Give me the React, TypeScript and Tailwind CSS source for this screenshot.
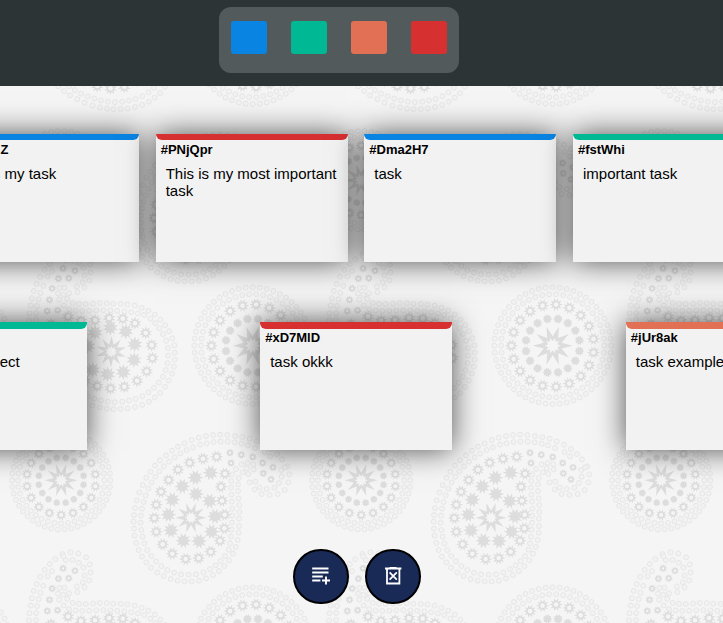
import React from "react";

type Point = [number, number];

const DARK = "#dddddd";
const LIGHT = "#e5e5e5";

// Paisley geometry, in thirds of a pixel; the head's centre is at HEAD.
const HEAD: Point = [213, 293];
const OUTER_BEADS: Point[] = [
  [404, 208], [425, 222], [449, 225], [473, 222], [494, 210], [505, 187], [508, 163], [502, 139], [486, 118], [471, 102],
  [453, 87], [432, 74], [410, 64], [389, 56], [367, 51], [345, 48], [322, 45], [300, 44], [279, 45], [258, 48],
  [236, 53], [215, 60], [194, 70], [174, 80], [156, 92], [138, 106], [120, 121], [105, 137], [91, 155], [79, 173],
  [68, 195], [58, 217], [50, 241], [45, 264], [42, 285], [41, 305], [42, 326], [44, 347], [49, 369], [56, 390],
  [66, 410], [79, 427], [93, 443], [112, 457], [131, 468], [152, 477], [173, 482], [194, 484], [215, 484], [237, 482],
  [258, 475], [279, 465], [297, 453], [313, 438], [328, 421], [339, 401], [347, 381], [353, 360], [356, 338], [357, 318],
  [357, 296], [358, 276], [358, 255], [356, 235], [354, 213], [354, 193], [356, 174], [368, 157], [385, 162], [389, 187],
];
const INNER_BEADS: Point[] = [
  [406, 185], [419, 202], [440, 207], [463, 203], [477, 189], [485, 170], [484, 150], [495, 142], [450, 109], [434, 96], [405, 84],
  [384, 76], [365, 71], [344, 67], [323, 65], [302, 65], [281, 66], [260, 70], [240, 74], [219, 82], [200, 90],
  [181, 100], [164, 112], [147, 125], [132, 139], [118, 154], [106, 170], [95, 187], [85, 206], [77, 226], [71, 246],
  [66, 266], [63, 287], [62, 308], [64, 330], [68, 350], [73, 370], [82, 390], [94, 408], [108, 424], [124, 438],
  [142, 450], [162, 458], [183, 463], [206, 464], [228, 463], [250, 457], [270, 447], [287, 436], [302, 423], [315, 408],
  [326, 389], [330, 370], [333, 350], [335, 329], [336, 308], [337, 287], [337, 266], [336, 245], [334, 224], [333, 203],
  [334, 183], [337, 163], [348, 147], [365, 133], [383, 129], [400, 133], [401, 148], [380, 145],
];
const HOLLOW_STARS: Point[] = [
  [290, 110], [249, 116], [209, 128], [174, 149], [146, 180], [123, 215], [109, 254], [103, 294], [109, 335], [128, 373],
  [157, 401], [197, 417], [236, 414], [272, 395], [300, 362], [313, 325], [314, 284], [306, 242], [303, 200], [315, 161],
];
const TAIL_STARS: Point[] = [
  [330, 98], [364, 104], [398, 111], [428, 129], [459, 142], [333, 129], [430, 160], [453, 178],
];
const SOLID_STARS: Point[] = [
  [272, 158], [226, 173], [187, 199], [157, 239], [145, 284], [153, 331], [190, 362], [237, 363], [275, 335], [285, 289],
  [269, 243], [228, 222],
];

function starPath(cx: number, cy: number, outer: number, inner: number, tips = 10) {
  const pts: string[] = [];
  for (let i = 0; i < tips * 2; i++) {
    const r = i % 2 === 0 ? outer : inner;
    const a = (Math.PI * i) / tips;
    pts.push(`${(cx + r * Math.cos(a)).toFixed(2)} ${(cy + r * Math.sin(a)).toFixed(2)}`);
  }
  return `M${pts.join("L")}Z`;
}

function ring(radius: number, count: number, phase = 0): Point[] {
  return Array.from({ length: count }, (_, i) => {
    const a = phase + (2 * Math.PI * i) / count;
    return [radius * Math.cos(a), radius * Math.sin(a)];
  });
}

function Beads({ points }: { points: Point[] }) {
  return (
    <g fill="#f2f2f2" stroke={LIGHT} strokeWidth="0.95">
      {points.map(([x, y], i) => (
        <circle key={i} cx={x} cy={y} r="2.5" />
      ))}
    </g>
  );
}

function Stars({ points, outer, inner, hole }: { points: Point[]; outer: number; inner: number; hole?: number }) {
  return (
    <g>
      {points.map(([x, y], i) => (
        <React.Fragment key={i}>
          <path d={starPath(x, y, outer, inner)} fill={DARK} />
          {hole ? <circle cx={x} cy={y} r={hole} fill="#f5f5f5" /> : null}
        </React.Fragment>
      ))}
    </g>
  );
}

function Bloom({ size }: { size: number }) {
  return (
    <g>
      <path d={starPath(0, 0, size, size * 0.47)} fill={DARK} />
      <path d={starPath(0, 0, size * 0.4, size * 0.24)} fill="#f5f5f5" />
    </g>
  );
}

const local = (points: Point[]): Point[] => points.map(([x, y]) => [(x - HEAD[0]) / 3, (y - HEAD[1]) / 3]);

function Paisley({ x, y, turn = 0 }: { x: number; y: number; turn?: number }) {
  return (
    <g transform={`translate(${x} ${y}) rotate(${turn})`}>
      <Beads points={local(OUTER_BEADS)} />
      <Beads points={local(INNER_BEADS)} />
      <Stars points={local(HOLLOW_STARS)} outer={6.7} inner={3.6} hole={2.3} />
      <Stars points={local(TAIL_STARS)} outer={4.2} inner={2.7} hole={1.2} />
      <Stars points={local(SOLID_STARS)} outer={8} inner={4.4} />
      <Bloom size={15.5} />
    </g>
  );
}

function LargeRosette({ x, y }: { x: number; y: number }) {
  return (
    <g transform={`translate(${x} ${y})`}>
      <Beads points={ring(58.4, 52)} />
      <Beads points={ring(51.6, 46)} />
      <Stars points={ring(41.3, 19, Math.PI)} outer={6.7} inner={3.6} hole={2.3} />
      <Stars points={ring(27.2, 16, Math.PI / 16)} outer={4.9} inner={3.3} />
      <Bloom size={20} />
    </g>
  );
}

function SmallRosette({ x, y }: { x: number; y: number }) {
  return (
    <g transform={`translate(${x} ${y})`}>
      <Beads points={ring(49.2, 46)} />
      <Beads points={ring(43.2, 40)} />
      <Stars points={ring(34.7, 18, Math.PI / 18)} outer={5.8} inner={3.3} hole={2} />
      <Stars points={ring(22.8, 16, Math.PI / 16)} outer={3.9} inner={2.8} />
      <Bloom size={16.5} />
    </g>
  );
}

function Wallpaper() {
  return (
    <svg className="absolute inset-0 h-full w-full" aria-hidden="true">
      <defs>
        <pattern id="paisley" width="300" height="300" patternUnits="userSpaceOnUse">
          <Paisley x={191} y={217.7} />
          <Paisley x={111.2} y={51.7} turn={-88.5} />
          <Paisley x={111.2} y={351.7} turn={-88.5} />
          <SmallRosette x={61.2} y={180.3} />
          <LargeRosette x={252.7} y={45.7} />
          <LargeRosette x={-47.3} y={45.7} />
          <LargeRosette x={252.7} y={345.7} />
          <LargeRosette x={-47.3} y={345.7} />
        </pattern>
      </defs>
      <rect width="100%" height="100%" fill="url(#paisley)" />
    </svg>
  );
}

interface Task {
  id: string;
  text: string;
  bar: string;
}

function TaskCard({ task, tall }: { task: Task; tall?: boolean }) {
  return (
    <article className="h-32 w-48 shrink-0 bg-[#f2f2f2] shadow-[0_0_28px_rgba(0,0,0,0.68)]">
      <div className={`${tall ? "h-[7px]" : "h-1.5"} rounded-b-md ${task.bar}`} />
      <h2 className={`${tall ? "pt-0.5" : "pt-[3px]"} pl-[5px] text-[13px] leading-[14px] font-bold`}>{task.id}</h2>
      <p className="px-2.5 pt-2 text-[15px] leading-[17px]">{task.text}</p>
    </article>
  );
}

const firstRow: Task[] = [
  { id: "#kRvbHZ", text: "This is my task", bar: "bg-[#0984e3]" },
  { id: "#PNjQpr", text: "This is my most important task", bar: "bg-[#d63031]" },
  { id: "#Dma2H7", text: "task", bar: "bg-[#0984e3]" },
  { id: "#fstWhi", text: "important task", bar: "bg-[#00b894]" },
];

const secondRow: Task[] = [
  { id: "#bT4nQe", text: "create my project", bar: "bg-[#00b894]" },
  { id: "#xD7MlD", text: "task okkk", bar: "bg-[#d63031]" },
  { id: "#jUr8ak", text: "task example", bar: "bg-[#e17055]" },
];

const swatches = ["bg-[#0984e3]", "bg-[#00b894]", "bg-[#e17055]", "bg-[#d63031]"];

const roundButton =
  "flex h-[55px] w-14 items-center justify-center rounded-full border-2 border-black bg-[#192a56] text-white";

export default function App() {
  return (
    <div className="relative flex h-[623px] w-[723px] flex-col overflow-hidden bg-[#f5f5f5] font-['Liberation_Sans',Arial,sans-serif] text-black">
      <Wallpaper />
      <header className="relative h-[86px] shrink-0 bg-[#2d3436] pt-[7px] pl-[219px]">
        <div className="flex h-[66px] w-60 justify-between rounded-xl bg-[#535a5b] px-3 pt-3.5">
          {swatches.map((color) => (
            <button key={color} className={`h-[33px] w-9 rounded-[3px] ${color}`} />
          ))}
        </div>
      </header>

      <main className="relative flex flex-col gap-[60px] pt-12">
        <div className="ml-[-53px] flex gap-[16.67px]">
          {firstRow.map((task) => (
            <TaskCard key={task.id} task={task} />
          ))}
        </div>
        <div className="ml-[-105.4px] flex gap-[173.6px]">
          {secondRow.map((task) => (
            <TaskCard key={task.id} task={task} tall />
          ))}
        </div>
      </main>

      <footer className="relative flex gap-4 pt-[99px] pl-[293px]">
        <button className={roundButton} aria-label="Add task">
          <svg width="20" height="20" viewBox="0 0 20 20" fill="none" stroke="currentColor" strokeWidth="1.9">
            <path d="M1.2 1.5h16.3M1.2 5.5h16.3M1.2 9.5h10.6M1.2 13.5h8.2M11 13.5h8M15 9.5v8" />
          </svg>
        </button>
        <button className={roundButton} aria-label="Delete tasks">
          <svg width="20" height="20" viewBox="0 0 20 20" fill="none" stroke="currentColor" strokeWidth="1.8">
            <path d="M2 1.5h16.4M6.5 .9h7M4 1.5v15h12.4v-15M6.6 5.4l7.2 7.2M13.8 5.4l-7.2 7.2" />
          </svg>
        </button>
      </footer>
    </div>
  );
}
